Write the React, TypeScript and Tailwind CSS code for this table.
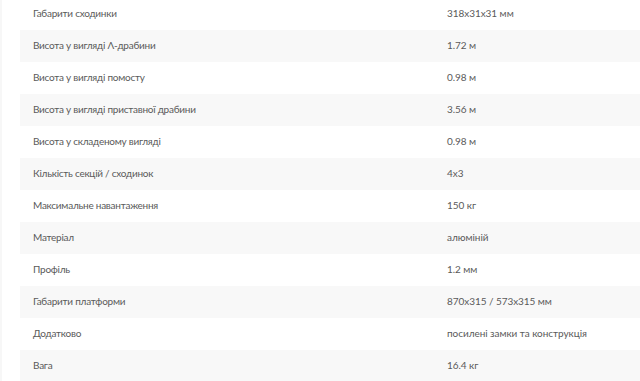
const rows: [string, string][] = [
  ["Габарити сходинки", "318x31x31 мм"],
  ["Висота у вигляді Λ-драбини", "1.72 м"],
  ["Висота у вигляді помосту", "0.98 м"],
  ["Висота у вигляді приставної драбини", "3.56 м"],
  ["Висота у складеному вигляді", "0.98 м"],
  ["Кількість секцій / сходинок", "4x3"],
  ["Максимальне навантаження", "150 кг"],
  ["Матеріал", "алюміній"],
  ["Профіль", "1.2 мм"],
  ["Габарити платформи", "870x315 / 573x315 мм"],
  ["Додатково", "посилені замки та конструкція"],
  ["Вага", "16.4 кг"],
];

export default function App() {
  return (
    <div className="w-[640px] h-[381px] overflow-hidden bg-white border-l-2 border-[#f7f7f7]">
      <div
        className="pl-[18px] -mt-[2px] text-[10px] text-[#5a5a5a]"
        style={{ fontFamily: 'Lato, "Open Sans", sans-serif' }}
      >
        {rows.map(([label, value], i) => (
          <div
            key={label}
            className={`flex h-[32px] items-center pb-[2px] ${i % 2 === 1 ? "bg-[#f8f8f8]" : "bg-white"}`}
          >
            <div className="w-[414px] pl-[13px] tracking-[-0.25px]">{label}</div>
            <div className="pl-[13px] tracking-[-0.05px]">{value}</div>
          </div>
        ))}
      </div>
    </div>
  );
}
